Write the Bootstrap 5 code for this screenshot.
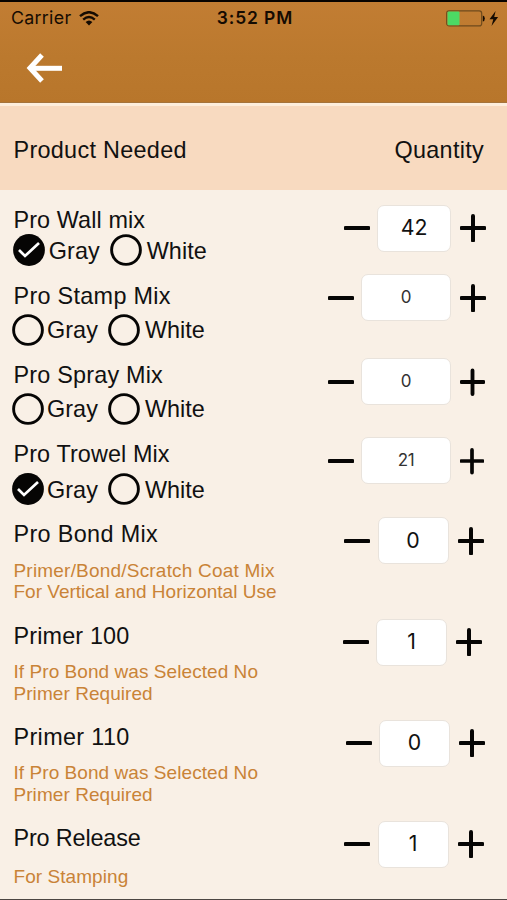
<!DOCTYPE html>
<html lang="en">
<head>
<meta charset="utf-8">
<meta name="viewport" content="width=device-width, initial-scale=1">
<title>Product Needed</title>
<link href="https://cdn.jsdelivr.net/npm/bootstrap@5.3.0/dist/css/bootstrap.min.css" rel="stylesheet">
<style>
  body { background: #f9f0e6; font-family: "Liberation Sans", Arial, sans-serif; font-size: 23.4px; color: #111; letter-spacing: .3px; overflow: hidden; }
  .screen { width: 507px; height: 900px; border-bottom: 1px solid #4c4642; overflow: hidden; }
  .topbar { height: 103px; border-top: 2px solid #080300; border-bottom: 1px solid #a5743c; background: linear-gradient(#c27d33, #bb792e 55%, #b8762b); }
  .status { height: 32px; padding: 0 8px 0 11px; font-family: Inter, Roboto, sans-serif; font-size: 17.8px; line-height: 32px; color: #150b02; display: grid; grid-template-columns: 1fr auto 1fr; }
  .clock { font-weight: 600; font-size: 17.4px; letter-spacing: .9px; }
  .back { margin: 18px 0 0 26px; }
  .heading { height: 87px; padding: 6px 23px 0 13.5px; border-top: 3px solid #fdeedd; background: #f8dac0; }
  .items { padding-top: 8px; }
  .item { height: var(--h); padding-left: 13.5px; padding-right: var(--r); }
  .name { margin-top: 8px; line-height: 28px; letter-spacing: var(--ls, .3px); }
  .choices { margin-left: var(--x, -2px); margin-top: var(--gap, 3.5px); height: 32px; line-height: 32px; letter-spacing: .05px; }
  .choices span { padding: 1px 0 0 3.5px; }
  .choices svg + span + svg { margin-left: 10.5px; }
  .choices span:last-child { padding-left: 4.5px; }
  .note { margin-top: 11.6px; font-size: 19px; line-height: 21.6px; color: #c98337; letter-spacing: .06px; }
  .fit-coat { letter-spacing: .2px; }
  .fit-use { letter-spacing: 0; }
  .stepper { height: 47px; margin-top: var(--t, 5px); }
  .qty { width: 71px; height: 47px; margin: 0 9px 0 7.5px; background: #fff; border: 1px solid #e9e3dc; border-radius: 7px; font-family: Inter, Roboto, sans-serif; font-size: 21.3px; letter-spacing: 0; }
  .wide { width: 90px; font-size: 17px; color: #333; letter-spacing: -.4px; }
  .mid { width: 74px; }
</style>
</head>
<body>
<svg class="d-none">
  <symbol id="on" viewBox="0 0 32 32"><circle cx="16" cy="16" r="15.9" fill="#060504"/><path d="M6 16l6 6L26 9" fill="none" stroke="#fff" stroke-width="2.700"/></symbol>
  <symbol id="off" viewBox="0 0 32 32"><circle cx="16" cy="16" r="14.400" fill="none" stroke="#060504" stroke-width="2.900"/></symbol>
  <symbol id="minus" viewBox="0 0 26 28"><path d="M1.500 14h23" stroke="#060504" stroke-width="4" stroke-linecap="round"/></symbol>
  <symbol id="plus" viewBox="0 0 26 28"><path d="M1.500 14h23M13 2v24.500" stroke="#060504" stroke-width="4" stroke-linecap="round"/></symbol>
</svg>
<div class="screen">
  <header class="topbar">
    <div class="status">
      <div class="d-flex align-items-center gap-2"><span>Carrier</span>
        <svg width="20" height="15" viewBox="0 0 20 15" fill="none" stroke="#150b02" stroke-width="2.400"><path d="M1 5.200Q10-2.800 19 5.200M4.200 8.600Q10 3.600 15.800 8.600"/><path d="M6.600 11Q10 8 13.400 11L10 14.500z" fill="#150b02" stroke="none"/></svg>
      </div>
      <div class="clock">3:52 PM</div>
      <div class="d-flex align-items-center justify-content-end">
        <svg width="39" height="17" viewBox="0 0 39 17" class="me-1"><rect x=".7" y=".9" width="35" height="15" rx="2.500" fill="none" stroke="#6f4a1c" stroke-width="1.200"/><rect x="1.500" y="1.600" width="12" height="13.600" rx="1" fill="#4cd964"/><path d="M36.800 5.500q2 .5 2 3t-2 3z" fill="#150b02"/></svg>
        <svg width="10.500" height="15" viewBox="1 0 10.500 15"><path d="M7.600 0L1.500 8.300h3.800L3.500 15l6.600-9H6.200z" fill="#150b02"/></svg>
      </div>
    </div>
    <svg class="back d-block" width="37" height="32" viewBox="0 0 37 32" fill="none" stroke="#fff"><path d="M16 3L4 16l12 13" stroke-width="5"/><path d="M4 16.300h32" stroke-width="5"/></svg>
  </header>
  <div class="heading d-flex align-items-center justify-content-between"><span>Product Needed</span><span>Quantity</span></div>
  <main class="items">
    <div class="item d-flex justify-content-between" style="--h:76px;--r:21px;--t:6.5px;--gap:.4px;--x:-.2px;--ls:.1px">
      <div><div class="name">Pro Wall mix</div>
        <div class="choices d-flex align-items-center"><svg width="32" height="32"><use href="#on"/></svg><span>Gray</span><svg width="32" height="32"><use href="#off"/></svg><span>White</span></div></div>
      <div class="stepper d-flex align-items-center"><svg width="26" height="28"><use href="#minus"/></svg><div class="qty mid d-flex align-items-center justify-content-center">42</div><svg width="26" height="28"><use href="#plus"/></svg></div>
    </div>
    <div class="item d-flex justify-content-between" style="--h:79px;--r:21px;--t:.4px">
      <div><div class="name">Pro Stamp Mix</div>
        <div class="choices d-flex align-items-center"><svg width="32" height="32"><use href="#off"/></svg><span>Gray</span><svg width="32" height="32"><use href="#off"/></svg><span>White</span></div></div>
      <div class="stepper d-flex align-items-center"><svg width="26" height="28"><use href="#minus"/></svg><div class="qty wide d-flex align-items-center justify-content-center">0</div><svg width="26" height="28"><use href="#plus"/></svg></div>
    </div>
    <div class="item d-flex justify-content-between" style="--h:79px;--r:22px;--ls:.2px">
      <div><div class="name">Pro Spray Mix</div>
        <div class="choices d-flex align-items-center"><svg width="32" height="32"><use href="#off"/></svg><span>Gray</span><svg width="32" height="32"><use href="#off"/></svg><span>White</span></div></div>
      <div class="stepper d-flex align-items-center"><svg width="26" height="28"><use href="#minus"/></svg><div class="qty wide d-flex align-items-center justify-content-center">0</div><svg width="25" height="28"><use href="#plus"/></svg></div>
    </div>
    <div class="item d-flex justify-content-between" style="--h:80px;--r:23px;--gap:5px;--ls:.1px">
      <div><div class="name">Pro Trowel Mix</div>
        <div class="choices d-flex align-items-center"><svg width="32" height="32"><use href="#on"/></svg><span>Gray</span><svg width="32" height="32"><use href="#off"/></svg><span>White</span></div></div>
      <div class="stepper d-flex align-items-center"><svg width="26" height="28"><use href="#minus"/></svg><div class="qty wide d-flex align-items-center justify-content-center">21</div><svg width="24" height="28"><use href="#plus"/></svg></div>
    </div>
    <div class="item d-flex justify-content-between" style="--h:101.5px;--r:23.5px;--ls:.35px">
      <div><div class="name">Pro Bond Mix</div><div class="note"><span class="fit-coat">Primer/Bond/Scratch Coat Mix</span><br><span class="fit-use">For Vertical and Horizontal Use</span></div></div>
      <div class="stepper d-flex align-items-center"><svg width="26" height="28"><use href="#minus"/></svg><div class="qty d-flex align-items-center justify-content-center">0</div><svg width="26" height="28"><use href="#plus"/></svg></div>
    </div>
    <div class="item d-flex justify-content-between" style="--h:101px;--r:25px;--ls:.15px">
      <div><div class="name">Primer 100</div><div class="note">If Pro Bond was Selected No<br>Primer Required</div></div>
      <div class="stepper d-flex align-items-center"><svg width="26" height="28"><use href="#minus"/></svg><div class="qty d-flex align-items-center justify-content-center">1</div><svg width="26" height="28"><use href="#plus"/></svg></div>
    </div>
    <div class="item d-flex justify-content-between" style="--h:101px;--r:22px;--ls:.35px">
      <div><div class="name">Primer 110</div><div class="note">If Pro Bond was Selected No<br>Primer Required</div></div>
      <div class="stepper d-flex align-items-center"><svg width="26" height="28"><use href="#minus"/></svg><div class="qty d-flex align-items-center justify-content-center">0</div><svg width="26" height="28"><use href="#plus"/></svg></div>
    </div>
    <div class="item d-flex justify-content-between" style="--h:83px;--r:23.5px;--ls:-.15px">
      <div><div class="name">Pro Release</div><div class="note">
        <div class="pt-1 lh-1">For Stamping</div></div></div>
      <div class="stepper d-flex align-items-center"><svg width="26" height="28"><use href="#minus"/></svg><div class="qty d-flex align-items-center justify-content-center">1</div><svg width="26" height="28"><use href="#plus"/></svg></div>
    </div>
  </main>
</div>
<script src="https://cdn.jsdelivr.net/npm/bootstrap@5.3.0/dist/js/bootstrap.bundle.min.js"></script>
</body>
</html>
